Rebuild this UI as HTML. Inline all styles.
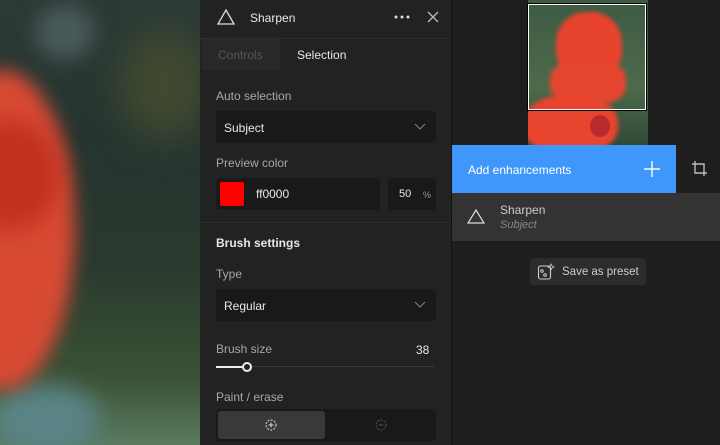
<!DOCTYPE html>
<html><head><style>
*{margin:0;padding:0;box-sizing:border-box}
body{width:720px;height:445px;overflow:hidden;background:#1e1e1e;font-family:"Liberation Sans",sans-serif;position:relative}
.a{position:absolute}
.t{color:#e8e8e8;font-size:12px}
.l{color:#a8a8a8;font-size:12px}
.box{background:#191919;border-radius:4px}
</style></head><body>
<!-- left photo -->
<div class="a" style="left:0;top:0;width:200px;height:445px;overflow:hidden;background:linear-gradient(180deg,#2c3a36 0%,#253530 30%,#2a3a2e 60%,#3b5236 85%,#5a7a60 100%)">
 <div class="a" style="left:35px;top:5px;width:60px;height:55px;border-radius:50%;background:#4a5a5a;filter:blur(10px)"></div>
 <div class="a" style="left:120px;top:30px;width:90px;height:110px;border-radius:50%;background:#414a30;filter:blur(18px)"></div>
 <div class="a" style="left:-10px;top:385px;width:110px;height:70px;border-radius:50%;background:#5a8486;filter:blur(12px)"></div>
 <div class="a" style="left:-70px;top:70px;width:145px;height:320px;border-radius:50%;background:#d84a34;filter:blur(9px)"></div>
 <div class="a" style="left:-40px;top:120px;width:100px;height:110px;border-radius:50%;background:#c0301e;filter:blur(12px)"></div>
</div>
<!-- middle panel -->
<div class="a" style="left:200px;top:0;width:251px;height:445px;background:#222"></div>
<div class="a" style="left:451px;top:0;width:1px;height:445px;background:#141414"></div>
<svg class="a" style="left:216px;top:8px" width="20" height="18"><path d="M10 2 L18 16 L2 16 Z" fill="none" stroke="#ddd" stroke-width="1.3"/></svg>
<div class="a t" style="left:250px;top:11px;font-size:12px">Sharpen</div>
<svg class="a" style="left:393px;top:14px" width="18" height="6"><circle cx="3" cy="3" r="1.5" fill="#ddd"/><circle cx="9" cy="3" r="1.5" fill="#ddd"/><circle cx="15" cy="3" r="1.5" fill="#ddd"/></svg>
<svg class="a" style="left:427px;top:11px" width="12" height="12"><path d="M1 1L11 11M11 1L1 11" stroke="#bbb" stroke-width="1.3"/></svg>
<div class="a" style="left:200px;top:38px;width:251px;height:1px;background:#2e2e2e"></div>
<div class="a" style="left:202px;top:39px;width:78px;height:31px;background:#282828"></div>
<div class="a" style="left:218px;top:48px;color:#555;font-size:12px">Controls</div>
<div class="a t" style="left:297px;top:48px">Selection</div>
<div class="a l" style="left:216px;top:89px">Auto selection</div>
<div class="a box" style="left:216px;top:111px;width:220px;height:32px"></div>
<div class="a t" style="left:224px;top:121px">Subject</div>
<svg class="a" style="left:414px;top:123px" width="12" height="8"><path d="M1 1L6 6L11 1" fill="none" stroke="#777" stroke-width="1.2"/></svg>
<div class="a l" style="left:216px;top:156px">Preview color</div>
<div class="a box" style="left:216px;top:178px;width:164px;height:32px"></div>
<div class="a" style="left:220px;top:182px;width:24px;height:24px;background:#f00;border-radius:2px"></div>
<div class="a t" style="left:256px;top:187px">ff0000</div>
<div class="a box" style="left:388px;top:178px;width:48px;height:32px"></div>
<div class="a t" style="left:399px;top:188px;font-size:11px">50</div>
<div class="a" style="left:423px;top:190px;color:#999;font-size:9px">%</div>
<div class="a" style="left:200px;top:222px;width:251px;height:1px;background:#2e2e2e"></div>
<div class="a t" style="left:216px;top:236px;font-weight:bold">Brush settings</div>
<div class="a l" style="left:216px;top:267px">Type</div>
<div class="a box" style="left:216px;top:289px;width:220px;height:32px"></div>
<div class="a t" style="left:224px;top:299px">Regular</div>
<svg class="a" style="left:414px;top:301px" width="12" height="8"><path d="M1 1L6 6L11 1" fill="none" stroke="#777" stroke-width="1.2"/></svg>
<div class="a l" style="left:216px;top:342px">Brush size</div>
<div class="a t" style="left:416px;top:343px">38</div>
<div class="a" style="left:216px;top:366px;width:218px;height:1px;background:#3a3a3a"></div>
<div class="a" style="left:216px;top:366px;width:30px;height:2px;background:#eee"></div>
<div class="a" style="left:242px;top:362px;width:10px;height:10px;border:2px solid #eee;border-radius:50%;background:#222"></div>
<div class="a l" style="left:216px;top:390px">Paint / erase</div>
<div class="a box" style="left:216px;top:409px;width:220px;height:32px"></div>
<div class="a" style="left:218px;top:411px;width:107px;height:28px;background:#393939;border-radius:3px"></div>
<svg class="a" style="left:265px;top:419px" width="12" height="12"><circle cx="6" cy="6" r="5" fill="none" stroke="#ddd" stroke-dasharray="2 1.3"/><path d="M6 3.5V8.5M3.5 6H8.5" stroke="#ddd"/></svg>
<svg class="a" style="left:375px;top:419px" width="12" height="12"><circle cx="6" cy="6" r="5" fill="none" stroke="#555" stroke-dasharray="2 1.3"/><path d="M3.5 6H8.5" stroke="#555"/></svg>
<!-- right -->
<div class="a" style="left:528px;top:0;width:120px;height:145px;overflow:hidden;background:linear-gradient(180deg,#3d5a44,#4e6a4a 60%,#2f4a36)">
 <div class="a" style="left:28px;top:12px;width:66px;height:70px;border-radius:45%;background:#e8432e;filter:blur(2px)"></div>
 <div class="a" style="left:22px;top:60px;width:76px;height:45px;border-radius:40%;background:#e44630;filter:blur(2px)"></div>
 <div class="a" style="left:-5px;top:95px;width:95px;height:60px;border-radius:45%;background:#e8442e;filter:blur(2px)"></div>
 <div class="a" style="left:62px;top:115px;width:20px;height:22px;border-radius:50%;background:#b82a30"></div>
</div>
<div class="a" style="left:528px;top:4px;width:118px;height:106px;border:1px solid #fff;outline:1px solid #000"></div>
<div class="a" style="left:452px;top:145px;width:224px;height:48px;background:#3f97fc"></div>
<div class="a" style="left:468px;top:163px;color:#fff;font-size:12px">Add enhancements</div>
<svg class="a" style="left:643px;top:160px" width="18" height="18"><path d="M9 1V17M1 9H17" stroke="#fff" stroke-width="1.4"/></svg>
<svg class="a" style="left:691px;top:160px" width="18" height="18"><path d="M4 1V13H16M1 4H13V16" fill="none" stroke="#bbb" stroke-width="1.4"/></svg>
<div class="a" style="left:452px;top:193px;width:268px;height:48px;background:#333"></div>
<svg class="a" style="left:467px;top:208px" width="18" height="16"><path d="M9 2L17 15H1Z" fill="none" stroke="#ddd" stroke-width="1.2"/></svg>
<div class="a t" style="left:500px;top:203px;color:#ccc">Sharpen</div>
<div class="a" style="left:500px;top:219px;color:#888;font-size:11px;font-style:italic">Subject</div>
<div class="a" style="left:530px;top:258px;width:116px;height:27px;background:#2c2c2c;border-radius:3px"></div>
<svg class="a" style="left:537px;top:263px" width="18" height="18"><rect x="1.5" y="3" width="12" height="13" rx="2" fill="none" stroke="#ccc" stroke-width="1.1"/><circle cx="5" cy="8" r="1.3" fill="none" stroke="#ccc"/><circle cx="8" cy="12" r="1.3" fill="none" stroke="#ccc"/><path d="M14 1L15 3L17 4L15 5L14 7L13 5L11 4L13 3Z" fill="none" stroke="#ccc" stroke-width=".8"/></svg>
<div class="a" style="left:562px;top:266px;color:#ccc;font-size:11.5px">Save as preset</div>
</body></html>
